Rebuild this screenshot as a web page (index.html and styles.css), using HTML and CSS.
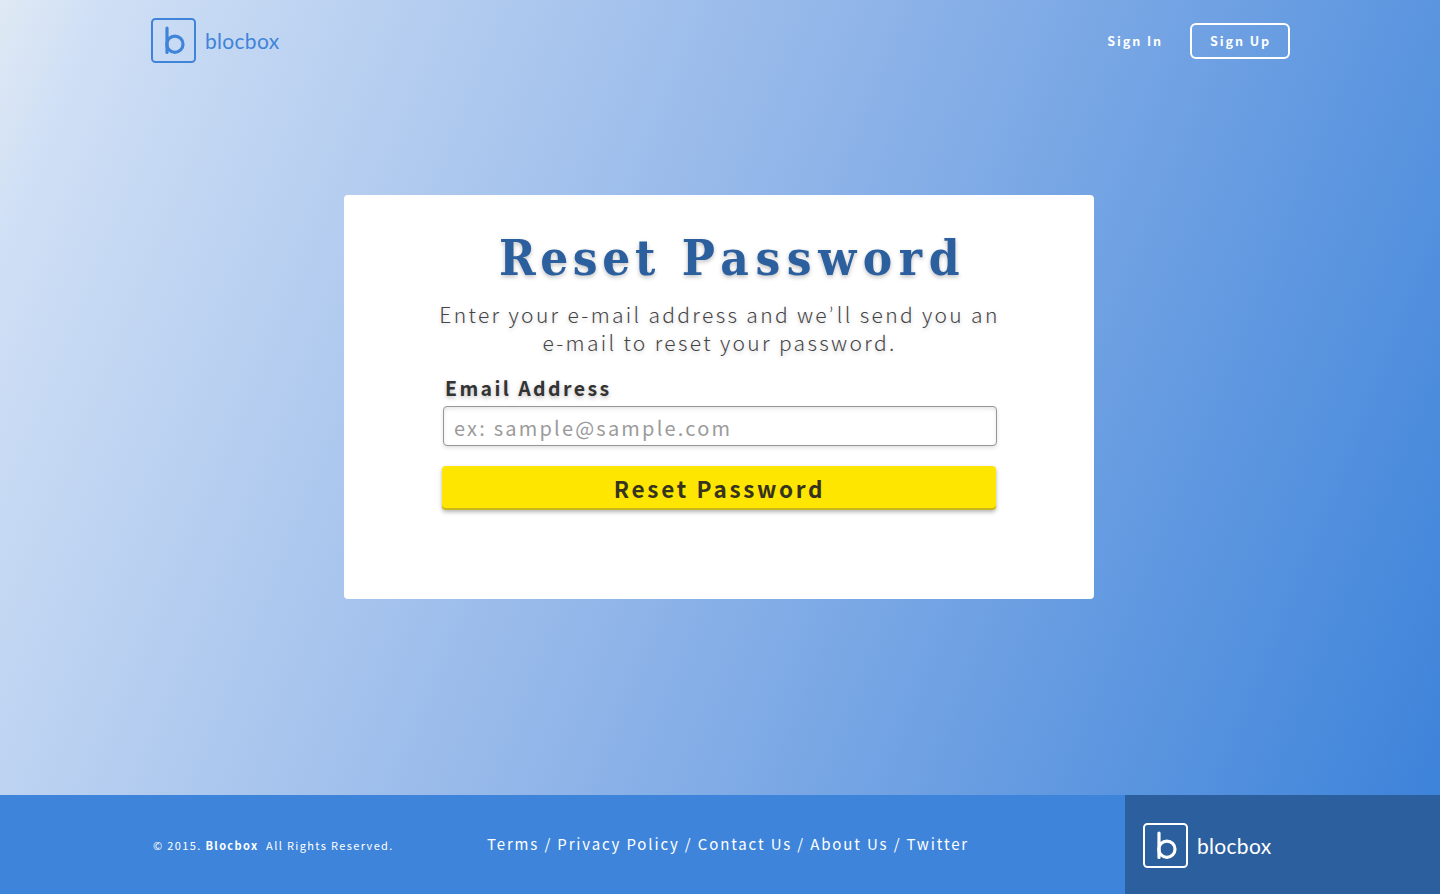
FILE: index.html
```html
<!DOCTYPE html>
<html lang="en">
<head>
<meta charset="utf-8">
<title>Reset Password</title>
<link rel="stylesheet" href="styles.css">
</head>
<body>
<div class="page">
  <header class="header">
    <a class="logo">
      <svg class="logo-mark" viewBox="0 0 45 45"><rect x="1" y="1" width="43" height="43" rx="3.5"/><path class="bar" d="M16 10V34.5"/><circle class="bar" cx="23.9" cy="26.2" r="8.1"/></svg>
      <span class="logo-text">blocbox</span>
    </a>
    <nav class="nav">
      <a class="sign-in">Sign In</a>
      <a class="sign-up">Sign Up</a>
    </nav>
  </header>
  <main class="main">
    <section class="card">
      <h1 class="title"><span class="title-first">Reset</span> Password</h1>
      <p class="lead">Enter your e-mail address and we<span class="apostrophe">’</span>ll send you an<br>e-mail to reset your password.</p>
      <label class="label" for="email">Email Address</label>
      <input class="input" id="email" type="email" placeholder="ex: sample@sample.com">
      <button class="button" type="button">Reset Password</button>
    </section>
  </main>
  <footer class="footer">
    <p class="copy">© 2015. <b>Blocbox</b>&nbsp; All Rights Reserved.</p>
    <p class="links">Terms / Privacy Policy / Contact Us / About Us / Twitter</p>
    <div class="footer-brand">
      <a class="logo logo-light">
        <svg class="logo-mark" viewBox="0 0 45 45"><rect x="1" y="1" width="43" height="43" rx="3.5"/><path class="bar" d="M16 10V34.5"/><circle class="bar" cx="23.9" cy="26.2" r="8.1"/></svg>
        <span class="logo-text">blocbox</span>
      </a>
    </div>
  </footer>
</div>
</body>
</html>
```
FILE: styles.css
```css
* { box-sizing: border-box; }
body {
  margin: 0;
  font-family: "Noto Sans CJK SC", "Noto Sans", sans-serif;
}
h1, p { margin: 0; }
.page {
  display: flex;
  flex-direction: column;
  height: 894px;
  overflow: hidden;
  background: linear-gradient(112deg, #dfe9f4 0%, #cfdff5 6%, #92b6e9 48%, #3d83da 100%) 0 0 / 1440px 795px no-repeat;
}
.header {
  display: flex;
  justify-content: space-between;
  align-items: flex-start;
  height: 195px;
  padding: 18px 150px 0 151px;
}
.logo {
  display: flex;
  align-items: center;
  gap: 9px;
  color: #4084d9;
}
.logo-light { color: #fff; }
.logo-mark {
  width: 45px;
  height: 45px;
  fill: none;
  stroke: currentColor;
  stroke-width: 2;
}
.logo-mark .bar { stroke-width: 3.2; stroke-linecap: round; }
.logo-text {
  font: 400 21px/24px Lato, sans-serif;
  letter-spacing: 0.3px;
}
.nav {
  display: flex;
  align-items: center;
  gap: 27px;
  padding-top: 5px;
  color: #fff;
  font-size: 12.6px;
  font-weight: 700;
  letter-spacing: 1.9px;
}
.sign-in { line-height: 33px; padding-bottom: 2px; }
.sign-up {
  width: 100px;
  height: 36px;
  border: 2px solid #fff;
  border-radius: 6px;
  line-height: 31px;
  padding-left: 18px;
}
.main {
  flex: 1;
  padding-left: 344px;
}
.card {
  display: flex;
  flex-direction: column;
  width: 750px;
  height: 404px;
  padding: 31px 97px 0 98px;
  border-radius: 4px;
  background: #fff;
  color: #333;
}
.title {
  margin-left: 57px;
  height: 74px;
  white-space: nowrap;
  color: #2c5f9e;
  font: 700 49px/64px "DejaVu Serif Condensed", "DejaVu Serif", serif;
  font-stretch: condensed;
  letter-spacing: 6.6px;
  text-shadow: 0 2px 4px rgba(0, 0, 0, .25);
}
.title-first { letter-spacing: 4.6px; }
.lead {
  align-self: center;
  height: 74px;
  white-space: nowrap;
  text-align: center;
  color: #444;
  font-size: 21px;
  font-weight: 300;
  line-height: 28px;
  letter-spacing: 2.34px;
  text-shadow: 0 2px 4px rgba(0, 0, 0, .2);
}
.apostrophe { font-family: Lato, sans-serif; line-height: 0; letter-spacing: 3.5px; }
.label {
  height: 32px;
  padding-left: 3px;
  font-size: 19.5px;
  font-weight: 700;
  line-height: 28px;
  letter-spacing: 2.4px;
  text-shadow: 0 2px 4px rgba(0, 0, 0, .25);
}
.input {
  width: 554px;
  height: 40px;
  margin: 0 0 20px 1px;
  padding: 2px 10px 0;
  border: 1px solid #979797;
  border-radius: 4px;
  background: #fff;
  box-shadow: 0 2px 4px rgba(0, 0, 0, .12), inset 0 2px 4px rgba(0, 0, 0, .1);
  font: 400 20px/30px "Noto Sans CJK SC", sans-serif;
  letter-spacing: 2.2px;
}
.input::placeholder { color: #9b9b9b; opacity: 1; }
.button {
  width: 554px;
  height: 44px;
  padding: 0 0 1px 1px;
  border: 0;
  border-radius: 4px;
  background: #ffe600;
  box-shadow: inset 0 -2px 0 #c9b71b, 0 2px 4px rgba(0, 0, 0, .3);
  color: #36341e;
  font: 700 22.5px/40px "Noto Sans CJK SC", sans-serif;
  letter-spacing: 2.7px;
}
.footer {
  display: flex;
  height: 99px;
  background: #3e84da;
  color: #fff;
  white-space: nowrap;
}
.copy {
  width: 487px;
  padding: 41px 0 0 153px;
  font-size: 11px;
  line-height: 18px;
  letter-spacing: 1.36px;
}
.links {
  width: 638px;
  padding-top: 37px;
  font-size: 15px;
  line-height: 24px;
  letter-spacing: 1.85px;
}
.footer-brand {
  width: 315px;
  padding: 28px 0 0 18px;
  background: #2c5f9e;
}
```
